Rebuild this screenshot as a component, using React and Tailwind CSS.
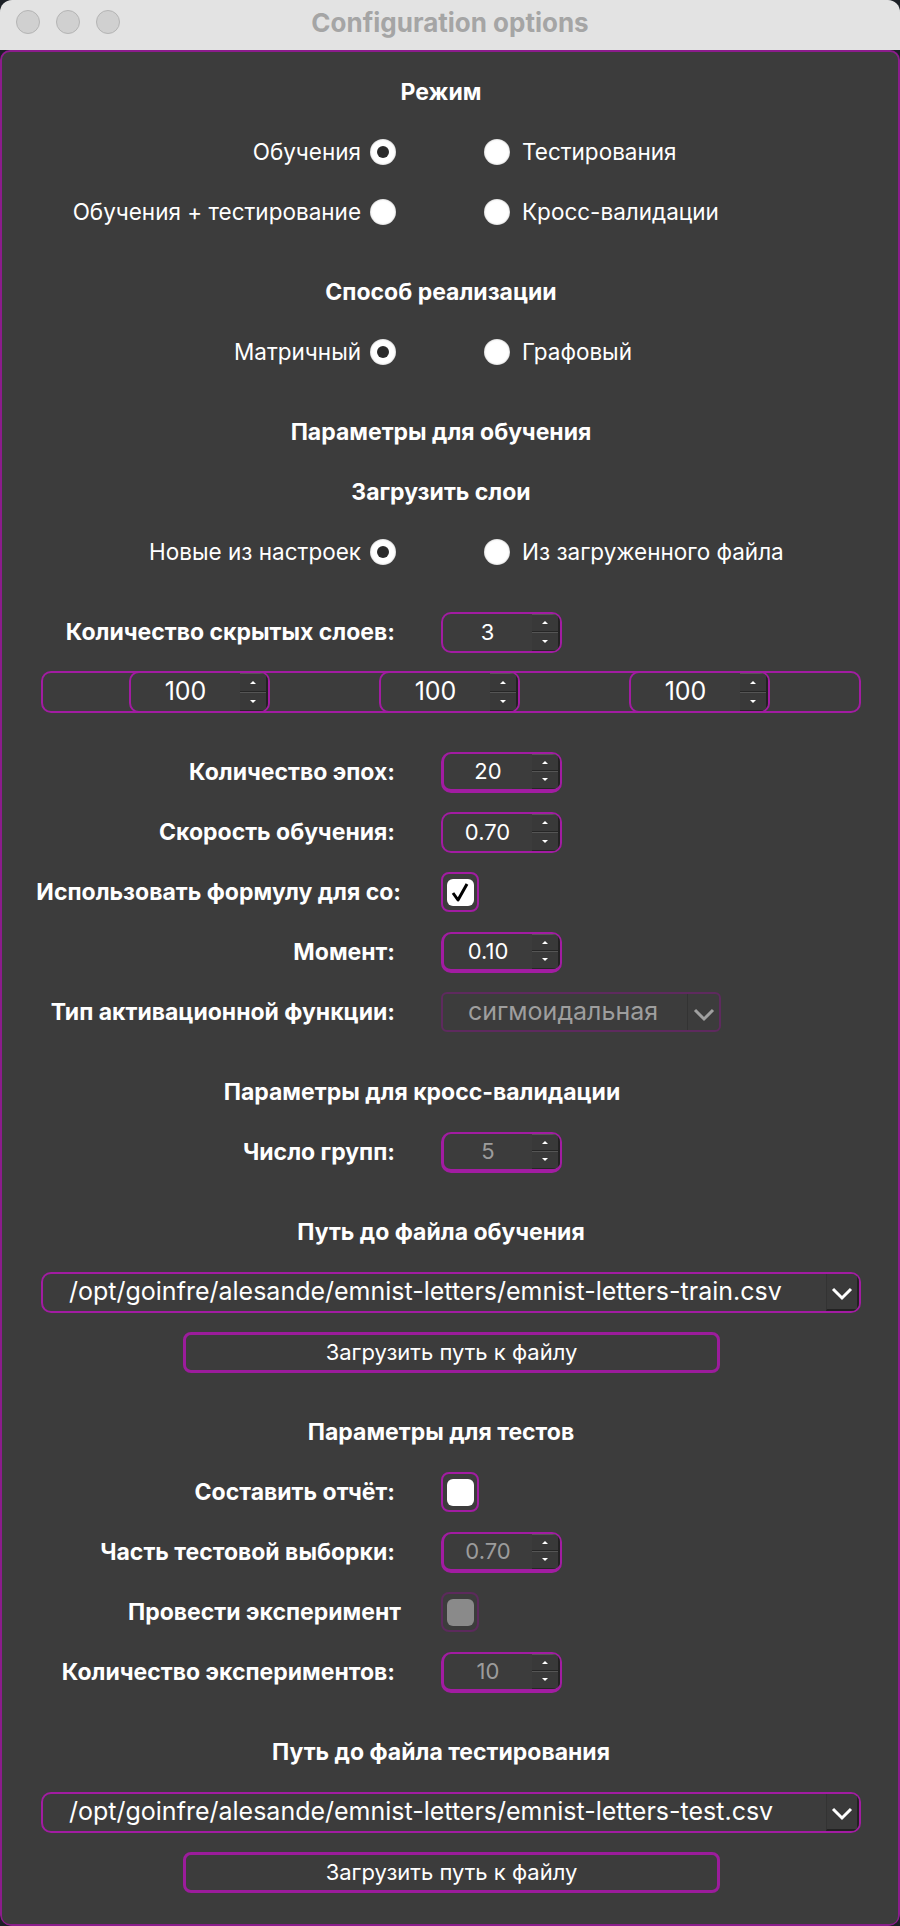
function Radio({ checked }) {
  return (
    <span className="flex h-[26px] w-[26px] shrink-0 items-center justify-center rounded-full bg-white shadow-[inset_0_0_2px_rgba(0,0,0,0.35)]">
      {checked && <span className="h-[12px] w-[12px] rounded-full bg-[#2a2a2a]" />}
    </span>
  )
}

function RadioRow({ left, right, leftOn }) {
  return (
    <div className="flex h-[60px] items-center text-[22.5px] text-white">
      <div className="flex w-[394px] items-center justify-end gap-[9px]">
        <span>{left}</span>
        <Radio checked={leftOn} />
      </div>
      <div className="ml-[88px] flex items-center gap-[12px]">
        <Radio />
        <span>{right}</span>
      </div>
    </div>
  )
}

function Heading({ children, shift }) {
  return (
    <div
      className={
        'flex h-[60px] items-center justify-center text-[23px] font-bold text-white ' +
        (shift ? 'pr-[56px]' : 'pr-[18px]')
      }
    >
      {children}
    </div>
  )
}

function Arrows() {
  return (
    <div className="flex w-[28px] flex-col border-r-2 border-r-[#222]">
      <div className="flex flex-1 items-center justify-center border-t border-b border-t-[#555] border-b-[#262626] bg-[#393939]">
        <span className="h-0 w-0 border-x-[3px] border-b-[3px] border-x-transparent border-b-white" />
      </div>
      <div className="flex flex-1 items-center justify-center border-t border-b border-t-[#555] border-b-[#262626] bg-[#393939]">
        <span className="h-0 w-0 border-x-[3px] border-t-[3px] border-x-transparent border-t-white" />
      </div>
    </div>
  )
}

function SpinBox({ value, dim, thick }) {
  return (
    <div
      className={
        'flex h-[41px] w-[121px] overflow-hidden rounded-[10px] border-[#a21ca2] ' +
        (thick ? 'border-2 border-b-[4px] border-l-[3px]' : 'border-2')
      }
    >
      <div
        className={
          'flex flex-1 items-center justify-center text-[22px] ' +
          (dim ? 'text-[#9c9c9c]' : 'text-white')
        }
      >
        {value}
      </div>
      <Arrows />
    </div>
  )
}

function LayerBox() {
  return (
    <div className="-my-[2px] flex h-[42px] w-[141px] overflow-hidden rounded-[10px] border-2 border-[#a21ca2]">
      <div className="flex flex-1 items-center justify-center text-[25px] text-white">100</div>
      <Arrows />
    </div>
  )
}

function Check({ checked, disabled }) {
  return (
    <div
      className={
        'flex h-[40px] w-[38px] items-center justify-center rounded-[8px] border-2 ' +
        (disabled ? 'border-[#5c2a5c]' : 'border-[#a21ca2]')
      }
    >
      <div
        className={
          'flex h-[27px] w-[27px] items-center justify-center rounded-[6px] ' +
          (disabled ? 'bg-[#8a8a8a]' : 'bg-white')
        }
      >
        {checked && (
          <svg width="20" height="22" viewBox="0 0 20 22">
            <path d="M3 12 L8 19 L17 3" fill="none" stroke="#000" strokeWidth="3" strokeLinejoin="round" />
          </svg>
        )}
      </div>
    </div>
  )
}

function Chevron({ color }) {
  return (
    <svg width="22" height="14" viewBox="0 0 22 14">
      <path d="M2 2 L11 11 L20 2" fill="none" stroke={color} strokeWidth="3" />
    </svg>
  )
}

function Field({ label, wide, children }) {
  return (
    <div className="flex h-[60px] items-center">
      <div
        className={
          'text-right text-[23px] font-bold text-white ' + (wide ? 'w-[399px]' : 'w-[393px]')
        }
      >
        {label}
      </div>
      <div className={wide ? 'ml-[40px]' : 'ml-[46px]'}>{children}</div>
    </div>
  )
}

function PathCombo({ path }) {
  return (
    <div className="flex h-[60px] items-center pl-[39px]">
      <div className="flex h-[41px] w-[820px] overflow-hidden rounded-[10px] border-2 border-[#a21ca2]">
        <div className="flex flex-1 items-center overflow-hidden whitespace-nowrap pl-[26px] text-[25px] text-white">
          {path}
        </div>
        <div className="flex w-[33px] shrink-0 items-center justify-center border-l border-r-2 border-b-2 border-l-[#333] border-r-[#222] border-b-[#222] bg-[#3a3a3a] pt-[6px]">
          <Chevron color="#fff" />
        </div>
      </div>
    </div>
  )
}

function LoadButton() {
  return (
    <div className="flex h-[60px] items-center justify-center pl-[3px]">
      <div className="flex h-[41px] w-[537px] items-center justify-center rounded-[8px] border-[3px] border-[#9c1c9c] text-[22px] text-white">
        Загрузить путь к файлу
      </div>
    </div>
  )
}

function Gap() {
  return <div className="h-[20px]" />
}

export default function App() {
  return (
    <div className="h-[1926px] w-[900px] bg-[#1c2026] font-['Inter','Noto_Sans',sans-serif]">
      <div className="flex h-full flex-col overflow-hidden rounded-[12px]">
        <div className="flex h-[50px] shrink-0 bg-[#e3e3e3]">
          <div className="relative flex h-[44px] w-full items-center justify-center">
            <div className="absolute left-[16px] top-[10px] flex gap-[16px]">
              <span className="h-[24px] w-[24px] rounded-full border border-[#b4b4b4] bg-[#d0d0d0]" />
              <span className="h-[24px] w-[24px] rounded-full border border-[#b4b4b4] bg-[#d0d0d0]" />
              <span className="h-[24px] w-[24px] rounded-full border border-[#b4b4b4] bg-[#d0d0d0]" />
            </div>
            <span className="text-[26px] font-bold text-[#a5a5a5]">Configuration options</span>
          </div>
        </div>

        <div className="flex-1 rounded-[10px] border-2 border-[#8c1c8c] bg-[#3c3c3c] pt-[10px]">
          <Heading>Режим</Heading>
          <RadioRow left="Обучения" right="Тестирования" leftOn />
          <RadioRow left="Обучения + тестирование" right="Кросс-валидации" />
          <Gap />
          <Heading>Способ реализации</Heading>
          <RadioRow left="Матричный" right="Графовый" leftOn />
          <Gap />
          <Heading>Параметры для обучения</Heading>
          <Heading>Загрузить слои</Heading>
          <RadioRow left="Новые из настроек" right="Из загруженного файла" leftOn />
          <Gap />
          <Field label="Количество скрытых слоев:">
            <SpinBox value="3" />
          </Field>
          <div className="flex h-[60px] items-center pl-[39px]">
            <div className="flex h-[42px] w-[820px] items-center gap-[109px] rounded-[10px] border-2 border-[#a21ca2] pl-[86px]">
              <LayerBox />
              <LayerBox />
              <LayerBox />
            </div>
          </div>
          <Gap />
          <Field label="Количество эпох:">
            <SpinBox value="20" thick />
          </Field>
          <Field label="Скорость обучения:">
            <SpinBox value="0.70" />
          </Field>
          <Field label="Использовать формулу для со:" wide>
            <Check checked />
          </Field>
          <Field label="Момент:">
            <SpinBox value="0.10" thick />
          </Field>
          <Field label="Тип активационной функции:">
            <div className="flex h-[40px] w-[280px] overflow-hidden rounded-[6px] border-2 border-[#5e2a5e]">
              <div className="flex flex-1 items-center pl-[25px] text-[25px] text-[#9e9e9e]">
                сигмоидальная
              </div>
              <div className="flex w-[32px] items-center justify-center border-l border-l-[#333] pt-[6px]">
                <Chevron color="#a0a0a0" />
              </div>
            </div>
          </Field>
          <Gap />
          <Heading shift>Параметры для кросс-валидации</Heading>
          <Field label="Число групп:">
            <SpinBox value="5" dim thick />
          </Field>
          <Gap />
          <Heading>Путь до файла обучения</Heading>
          <PathCombo path="/opt/goinfre/alesande/emnist-letters/emnist-letters-train.csv" />
          <LoadButton />
          <Gap />
          <Heading>Параметры для тестов</Heading>
          <Field label="Составить отчёт:">
            <Check />
          </Field>
          <Field label="Часть тестовой выборки:">
            <SpinBox value="0.70" dim thick />
          </Field>
          <Field label="Провести эксперимент" wide>
            <Check disabled />
          </Field>
          <Field label="Количество экспериментов:">
            <SpinBox value="10" dim thick />
          </Field>
          <Gap />
          <Heading>Путь до файла тестирования</Heading>
          <PathCombo path="/opt/goinfre/alesande/emnist-letters/emnist-letters-test.csv" />
          <LoadButton />
        </div>
      </div>
    </div>
  )
}
